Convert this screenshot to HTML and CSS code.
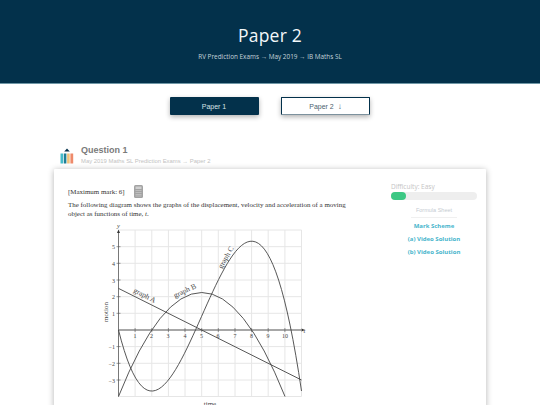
FILE: index.html
```html
<!DOCTYPE html>
<html lang="en">
<head>
<meta charset="utf-8">
<title>Paper 2</title>
<link rel="stylesheet" href="styles.css">
</head>
<body>
<header class="hero">
  <h1 class="hero-title">Paper 2</h1>
  <p class="hero-crumbs">RV Prediction Exams → May 2019 → IB Maths SL</p>
</header>
<nav class="tabs">
  <a class="tab tab-dark">Paper 1</a>
  <a class="tab tab-light">Paper 2 <span class="tab-arrow">↓</span></a>
</nav>
<section class="question-head">
  <svg class="q-icon" viewBox="0 0 14 17" width="14" height="17">
    <path d="M4.2 4.4 7 1.6l2.8 2.8z" fill="#03314b"/>
    <rect x="0.5" y="6.5" width="2.6" height="10" fill="#45bcc9"/>
    <rect x="3.8" y="6.5" width="2.6" height="10" fill="#1f7f95"/>
    <rect x="7.1" y="6.5" width="2.6" height="10" fill="#f0c27a"/>
    <rect x="10.4" y="6.5" width="2.8" height="10" fill="#ee8a6a"/>
  </svg>
  <div>
    <h2 class="q-title">Question 1</h2>
    <p class="q-sub">May 2019 Maths SL Prediction Exams → Paper 2</p>
  </div>
</section>
<main class="card">
  <div class="q-body">
    <div class="marks">
      <span>[Maximum mark: 6]</span>
      <svg class="calc" viewBox="0 0 9 13" width="9" height="13">
        <rect width="9" height="13" rx="1.5" fill="#a3a3a3"/>
        <rect x="1.5" y="1.5" width="6" height="2.5" fill="#d0d0d0"/>
        <path d="M1.5 5.5h6M1.5 7.5h6M1.5 9.5h6M1.5 11h6" stroke="#c4c4c4" stroke-width=".8"/>
      </svg>
    </div>
    <p class="prompt">The following diagram shows the graphs of the displacement, velocity and acceleration of a moving object as functions of time, <i>t</i>.</p>
    <svg class="graph" viewBox="100 220 215 190" width="215" height="190">
      <g stroke="#e6e6e6" stroke-width="1" fill="none">
        <path d="M135.1 230V396.5M151.8 230V396.5M168.4 230V396.5M185 230V396.5M201.7 230V396.5M218.3 230V396.5M235 230V396.5M251.6 230V396.5M268.2 230V396.5M284.9 230V396.5M301.5 230V396.5"/>
        <path d="M118.5 230H301.5M118.5 246.7H301.5M118.5 263.3H301.5M118.5 280H301.5M118.5 296.7H301.5M118.5 313.3H301.5M118.5 346.6H301.5M118.5 363.3H301.5M118.5 380H301.5M118.5 396.5H301.5"/>
      </g>
      <path d="M118.5 330H301" stroke="#8a8a8a" stroke-width="1.3"/>
      <path d="M118.5 396.5V232" stroke="#555" stroke-width=".8"/>
      <path d="M118.5 229.5l-1.5 3.5h3zM305 330l-3.5-1.5v3z" fill="#333"/>
      <path d="M135.1 328v4M151.8 328v4M168.4 328v4M185 328v4M201.7 328v4M218.3 328v4M235 328v4M251.6 328v4M268.2 328v4M284.9 328v4M116.5 246.7h4M116.5 263.3h4M116.5 280h4M116.5 296.7h4M116.5 313.3h4M116.5 346.6h4M116.5 363.3h4M116.5 380h4" stroke="#555" stroke-width=".6"/>
      <g fill="none" stroke="#444" stroke-width=".9">
        <path d="M118.5 288.4L301.5 380"/>
        <path d="M118.5 396.5Q201.7 188.5 285 396.5"/>
        <path d="M118.5 330C179.5 574.2 240.5 -21 301.5 391"/>
      </g>
      <g class="axis-num" text-anchor="middle">
        <text x="135" y="337.5">1</text><text x="151.5" y="337.5">2</text><text x="168" y="337.5">3</text><text x="185" y="337.5">4</text><text x="201.5" y="337.5">5</text><text x="218" y="337.5">6</text><text x="235" y="337.5">7</text><text x="251.5" y="337.5">8</text><text x="268" y="337.5">9</text><text x="285" y="337.5">10</text>
      </g>
      <g class="axis-num" text-anchor="end">
        <text x="115" y="249">5</text><text x="115" y="266">4</text><text x="115" y="282.5">3</text><text x="115" y="299">2</text><text x="115" y="316">1</text><text x="115" y="349">−1</text><text x="115" y="366">−2</text><text x="115" y="382.5">−3</text>
      </g>
      <text class="axis-var" x="117" y="228">y</text>
      <text class="axis-var" x="303.5" y="332.5">t</text>
      <text class="axis-label" transform="translate(108 330) rotate(-90)" text-anchor="middle" x="18">motion</text>
      <text class="axis-label" x="210" y="405.5" text-anchor="middle">time</text>
      <text class="curve-label" transform="translate(133 292) rotate(27)">graph A</text>
      <text class="curve-label" transform="translate(175 298) rotate(-25)">graph B</text>
      <text class="curve-label" transform="translate(222 269) rotate(-60)">graph C</text>
    </svg>
  </div>
  <aside class="side">
    <div class="diff-label">Difficulty: Easy</div>
    <div class="diff-track"><div class="diff-fill"></div></div>
    <div class="side-links">
      <a class="formula">Formula Sheet</a>
      <a class="link">Mark Scheme</a>
      <a class="link">(a) Video Solution</a>
      <a class="link">(b) Video Solution</a>
    </div>
  </aside>
</main>
</body>
</html>
```
FILE: styles.css
```css
* { box-sizing: border-box; }
html, body { margin: 0; height: 405px; overflow: hidden; }
body { background: #fff; font-family: "Liberation Sans", sans-serif; }
.hero {
  height: 84px;
  background: #03314b;
  border-bottom: 1px solid #6f97a6;
  display: flex;
  flex-direction: column;
  align-items: center;
  padding-top: 23px;
}
.hero-title {
  margin: 0;
  font: 500 17.5px/24px "Open Sans", sans-serif;
  color: #f3f8fa;
  letter-spacing: .2px;
}
.hero-crumbs {
  margin: 5px 0 0;
  font: 400 6.4px/10px "Open Sans", sans-serif;
  color: #c3d3da;
}
.tabs { display: flex; justify-content: center; gap: 22px; padding-top: 13px; }
.tab {
  width: 89px;
  height: 18px;
  display: flex;
  align-items: center;
  justify-content: center;
  gap: 4px;
  font-size: 7px;
  border-radius: 1px;
  box-shadow: 0 2px 5px rgba(0, 0, 0, .3);
}
.tab-dark { background: #03314b; color: #d5e1e6; padding-right: 1px; }
.tab-light { background: #fff; color: #4d626f; border: 1px solid #03314b; border-bottom-color: #7d929e; }
.tab-arrow { font-size: 8px; }
.question-head { display: flex; gap: 7px; align-items: flex-start; margin: 29px 0 0 60px; }
.q-icon { margin-top: 3px; }
.q-title { margin: 0; font-size: 9px; line-height: 12px; color: #7a7a7a; }
.q-sub { margin: 1px 0 0; font-size: 5.9px; line-height: 9px; color: #c2c2c2; }
.card {
  margin: 3px 54px 0;
  width: 432px;
  height: 240px;
  display: flex;
  justify-content: space-between;
  background: #fff;
  border-radius: 1px;
  box-shadow: 0 1px 6px rgba(0, 0, 0, .3);
  padding: 13px 9px 0 14px;
}
.q-body { width: 290px; padding-top: 3px; font-family: "Liberation Serif", serif; font-size: 6.95px; color: #333; }
.marks { display: flex; align-items: center; gap: 9px; height: 13px; }
.prompt { margin: 3px 0 0; line-height: 8.5px; width: 280px; }
.graph { display: block; margin: 2px 0 0 32px; overflow: visible; }
.axis-num { font: 6px "Liberation Serif", serif; fill: #444; }
.axis-var { font: italic 6.5px "Liberation Serif", serif; fill: #444; }
.axis-label { font: 7px "Liberation Serif", serif; fill: #444; }
.curve-label { font: 7.5px "Liberation Serif", serif; fill: #444; }
.side { width: 86px; font-family: "Open Sans", sans-serif; }
.diff-label { font-size: 6.5px; line-height: 9px; color: #c4c4c4; }
.diff-track { height: 8px; margin-top: 1px; border-radius: 4px; background: #eeeeee; }
.diff-fill { width: 15px; height: 8px; border-radius: 4px; background: #3cc884; }
.side-links { display: flex; flex-direction: column; align-items: center; }
.formula { margin-top: 6px; padding: 0 0 3px; width: 46px; white-space: nowrap; font: 5.5px/8px "Liberation Sans", sans-serif; color: #c5cbd2; border-bottom: 1px solid #f0f0f0; text-align: center; }
.link { margin-top: 5px; font-weight: 700; font-size: 6px; line-height: 8px; color: #47b5cc; }
.formula + .link { margin-top: 4px; }
```
